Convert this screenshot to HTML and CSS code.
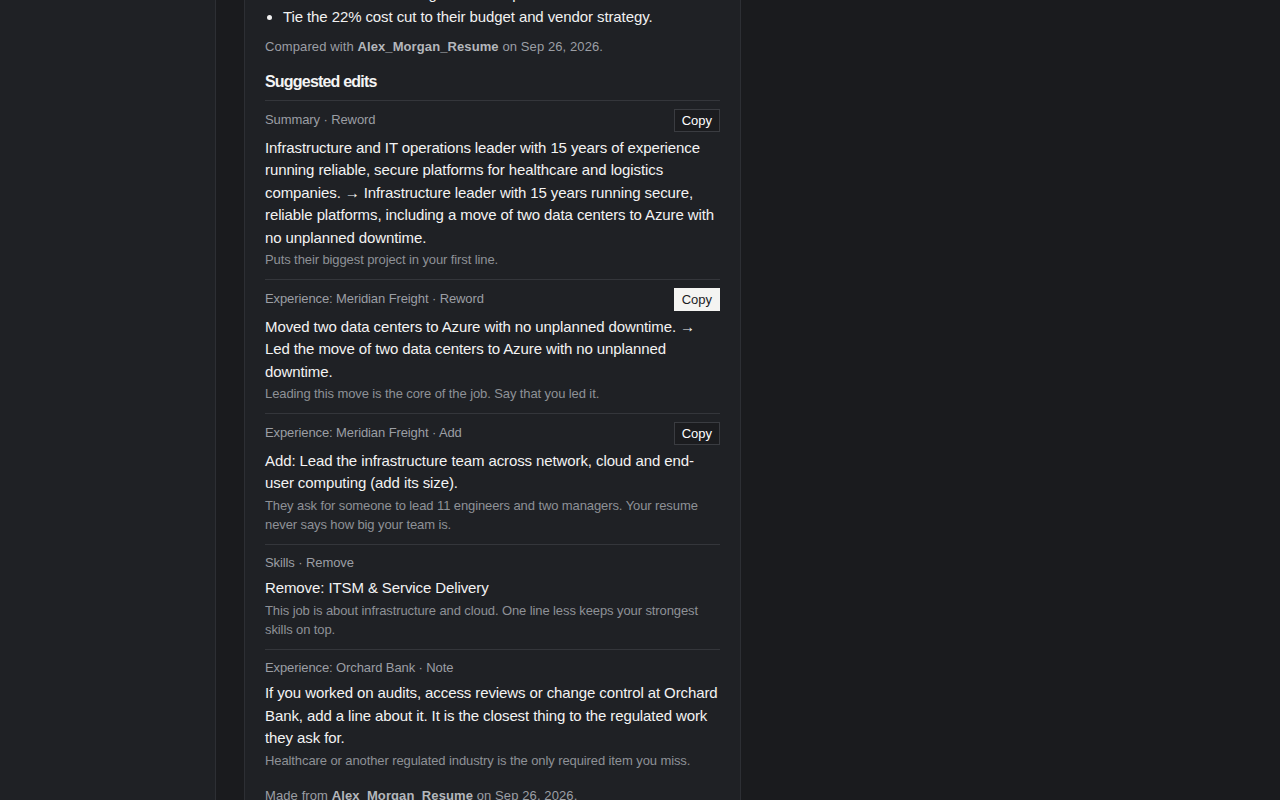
FILE: index.html
```html
<!DOCTYPE html>
<html lang="en">
<head>
    <meta charset="UTF-8">
    <meta name="viewport" content="width=device-width, initial-scale=1.0">
    <title>Resume match</title>
    <link rel="stylesheet" href="styles.css">
</head>

<body>
    <div id="layout">
        <div id="sidebar"></div>
        <div id="main">
            <div class="card">
                <ul class="todo">
                    <li>Show the scale of budget ownership and vendor work.</li>
                    <li>Tie the 22% cost cut to their budget and vendor strategy.</li>
                </ul>
                <p class="source">Compared with <b>Alex_Morgan_Resume</b> on Sep 26, 2026.</p>

                <h3>Suggested edits</h3>
                <div class="edits">
                    <div class="edit">
                        <div class="edit-head">
                            <span class="meta">Summary · Reword</span>
                            <button class="copy">Copy</button>
                        </div>
                        <p class="edit-text">Infrastructure and IT operations leader with 15 years of experience running reliable, secure platforms for healthcare and logistics companies. → Infrastructure leader with 15 years running secure, reliable platforms, including a move of two data centers to Azure with no unplanned downtime.</p>
                        <p class="why">Puts their biggest project in your first line.</p>
                    </div>
                    <div class="edit">
                        <div class="edit-head">
                            <span class="meta">Experience: Meridian Freight · Reword</span>
                            <button class="copy active">Copy</button>
                        </div>
                        <p class="edit-text">Moved two data centers to Azure with no unplanned downtime. → Led the move of two data centers to Azure with no unplanned downtime.</p>
                        <p class="why">Leading this move is the core of the job. Say that you led it.</p>
                    </div>
                    <div class="edit">
                        <div class="edit-head">
                            <span class="meta">Experience: Meridian Freight · Add</span>
                            <button class="copy">Copy</button>
                        </div>
                        <p class="edit-text">Add: Lead the infrastructure team across network, cloud and end-user computing (add its size).</p>
                        <p class="why">They ask for someone to lead 11 engineers and two managers. Your resume never says how big your team is.</p>
                    </div>
                    <div class="edit">
                        <div class="edit-head">
                            <span class="meta">Skills · Remove</span>
                        </div>
                        <p class="edit-text">Remove: ITSM &amp; Service Delivery</p>
                        <p class="why">This job is about infrastructure and cloud. One line less keeps your strongest skills on top.</p>
                    </div>
                    <div class="edit">
                        <div class="edit-head">
                            <span class="meta">Experience: Orchard Bank · Note</span>
                        </div>
                        <p class="edit-text">If you worked on audits, access reviews or change control at Orchard Bank, add a line about it. It is the closest thing to the regulated work they ask for.</p>
                        <p class="why">Healthcare or another regulated industry is the only required item you miss.</p>
                    </div>
                </div>
                <p class="source foot">Made from <b>Alex_Morgan_Resume</b> on Sep 26, 2026.</p>
            </div>
        </div>
    </div>
</body>

</html>
```

FILE: styles.css
```css
body{
  margin: 0;
  background-color: #1a1b1e;
  color: #f1f1f1;
  font-family: "Liberation Sans", Arial, sans-serif;
  overflow: hidden;
}
#layout{
  display: flex;
  min-height: 100vh;
}
#sidebar{
  width: 215px;
  flex-shrink: 0;
  background-color: #1f2125;
  border-right: 1px solid #2d2f34;
}
#main{
  padding-left: 28px;
}
.card{
  width: 455px;
  margin-top: -17px;
  padding: 0 20px 40px;
  background-color: #1f2125;
  border: 1px solid #2d2f34;
  border-top: none;
}
.todo{
  margin: 0;
  padding-left: 18px;
  font-size: 15px;
  line-height: 22.5px;
  letter-spacing: -0.1px;
}
.source{
  margin: 9px 0 0;
  font-size: 13px;
  line-height: 19.5px;
  color: #9b9ea4;
  letter-spacing: 0.1px;
}
.source b{
  color: #b4b7bc;
}
h3{
  margin: 13px 0 0;
  padding-bottom: 6px;
  font-size: 16px;
  line-height: 24px;
  letter-spacing: -0.8px;
  color: #f4f4f4;
}
.edit{
  border-top: 1px solid #34363b;
  padding: 8px 0 9px;
}
.edit-head{
  display: flex;
  justify-content: space-between;
  align-items: center;
  min-height: 19.5px;
  margin-bottom: 5px;
}
.meta{
  font-size: 13px;
  line-height: 19.5px;
  color: #9b9ea4;
  letter-spacing: -0.1px;
}
.copy{
  height: 23px;
  padding: 0 7px;
  background-color: #1b1c1f;
  color: #fff;
  border: 1px solid #3a3c41;
  font-size: 13px;
  font-family: "Liberation Sans", Arial, sans-serif;
  cursor: pointer;
}
.copy.active{
  background-color: #f4f4f2;
  color: #1b1c1f;
  border-color: #f4f4f2;
}
.edit-text{
  margin: 0;
  font-size: 15px;
  line-height: 22.5px;
  letter-spacing: -0.1px;
  color: #f3f3f3;
}
.why{
  margin: 1px 0 0;
  font-size: 13px;
  line-height: 19.5px;
  color: #8e9197;
  letter-spacing: -0.1px;
}
.foot{
  margin-top: 7px;
}
```
